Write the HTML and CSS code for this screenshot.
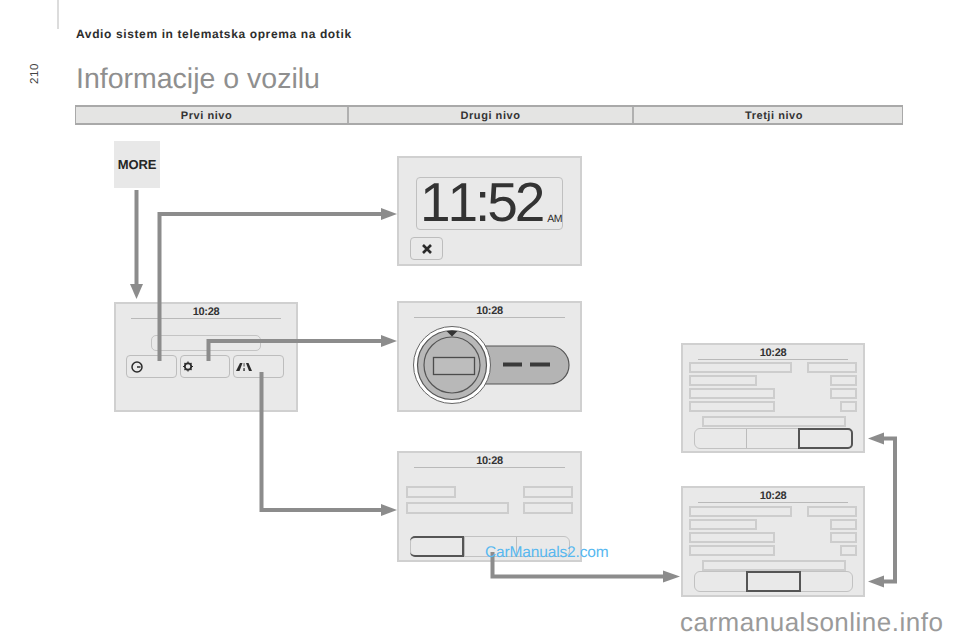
FILE: index.html
```html
<!DOCTYPE html>
<html lang="sl">
<head>
<meta charset="utf-8">
<title>Informacije o vozilu</title>
<link rel="stylesheet" href="styles.css">
</head>
<body>
<div class="page">
  <div class="edge-rule"></div>
  <div class="page-number">210</div>
  <main class="content">
    <div class="running-head">Avdio sistem in telematska oprema na dotik</div>
    <h1 class="title">Informacije o vozilu</h1>
    <div class="levels">
      <div class="level">Prvi nivo</div>
      <div class="level">Drugi nivo</div>
      <div class="level">Tretji nivo</div>
    </div>
  </main>

  <div class="more">MORE</div>

  <section class="screen s-menu">
    <div class="clock">10:28</div>
    <div class="menu-bar"></div>
    <div class="menu-buttons">
      <div class="menu-btn">
        <svg class="icon" width="16" height="14" viewBox="0 0 16 14"><circle cx="6" cy="7" r="5" fill="none" stroke="#2b2b2b" stroke-width="1.500"/><path d="M6 7h3.500" stroke="#2b2b2b" stroke-width="1.500"/></svg>
      </div>
      <div class="menu-btn">
        <svg class="icon icon-tight" width="16" height="14" viewBox="0 0 16 14"><circle cx="6" cy="6.500" r="3.200" fill="none" stroke="#2b2b2b" stroke-width="1.800"/><path d="M6 1.500v1.500M6 10v1.500M1 6.500h1.500M9.500 6.500H11M2.500 3l1 1M8.500 9l1 1M2.500 10l1-1M8.500 4l1-1" stroke="#2b2b2b" stroke-width="1.200"/></svg>
      </div>
      <div class="menu-btn">
        <svg class="icon icon-tight" width="18" height="14" viewBox="0 0 18 14"><path d="M1 11 5 3h2.500L4.500 11zM17 11 13.500 3H11l3 8zM8.300 11l.2-3h1.100l.2 3zM8.600 6.500 8.700 3h.7l.1 3.500z" fill="#2b2b2b"/></svg>
      </div>
    </div>
  </section>

  <section class="screen s-time">
    <div class="time-display"><span class="time-digits">11:52</span><span class="time-am">AM</span></div>
    <div class="close-btn">
      <svg width="12" height="12" viewBox="0 0 12 12"><path d="M2 2l8 8M10 2l-8 8" stroke="#2b2b2b" stroke-width="2.600"/></svg>
    </div>
  </section>

  <section class="screen s-dial">
    <div class="clock">10:28</div>
    <svg class="dial" width="181" height="90" viewBox="0 0 181 90">
      <path d="M53 28H151a19 19 0 0 1 0 38H53z" fill="#b4b4b4" stroke="#555" stroke-width="1.200"/>
      <circle cx="53" cy="47" r="38.500" fill="#fff" stroke="#666" stroke-width="1"/>
      <circle cx="53" cy="47" r="34.500" fill="#b8b8b8" stroke="#555" stroke-width="1.200"/>
      <circle cx="53" cy="47" r="28" fill="#b8b8b8" stroke="#555" stroke-width="1.200"/>
      <rect x="34.500" y="39.500" width="41" height="17" fill="#bdbdbd" stroke="#4c4c4c" stroke-width="1.300"/>
      <path d="M104 46.500h19M131 46.500h20" stroke="#3a3a3a" stroke-width="4"/>
      <path d="M47.500 13h11l-5.500 5.500z" fill="#333"/>
    </svg>
  </section>

  <section class="screen s-trip">
    <div class="clock">10:28</div>
    <div class="trip-rows">
      <div class="row"><div class="field w50"></div><div class="field w50"></div></div>
      <div class="row"><div class="field w103"></div><div class="field w50"></div></div>
    </div>
    <div class="tabs tabs-trip">
      <div class="tab tab-active-first"></div>
      <div class="tab"></div>
      <div class="tab"></div>
    </div>
  </section>

  <section class="screen s-data s-data-a">
    <div class="clock">10:28</div>
    <div class="data-rows">
      <div class="row"><div class="field w103"></div><div class="field w50"></div></div>
      <div class="row"><div class="field w68"></div><div class="field w27"></div></div>
      <div class="row"><div class="field w86"></div><div class="field w27"></div></div>
      <div class="row"><div class="field w86"></div><div class="field w17"></div></div>
      <div class="field wide"></div>
    </div>
    <div class="tabs tabs-data">
      <div class="tab"></div>
      <div class="tab"></div>
      <div class="tab tab-active-last"></div>
    </div>
  </section>

  <section class="screen s-data s-data-b">
    <div class="clock">10:28</div>
    <div class="data-rows">
      <div class="row"><div class="field w103"></div><div class="field w50"></div></div>
      <div class="row"><div class="field w68"></div><div class="field w27"></div></div>
      <div class="row"><div class="field w86"></div><div class="field w27"></div></div>
      <div class="row"><div class="field w86"></div><div class="field w17"></div></div>
      <div class="field wide"></div>
    </div>
    <div class="tabs tabs-data">
      <div class="tab tab-plain"></div>
      <div class="tab tab-active-mid"></div>
      <div class="tab tab-plain"></div>
    </div>
  </section>

  <svg class="arrows" width="960" height="640" viewBox="0 0 960 640">
    <g fill="none" stroke="#8c8c8c" stroke-width="4" stroke-linejoin="miter">
      <path d="M136.500 190V286"/>
      <path d="M159.500 361V214H383"/>
      <path d="M208.500 361V341H383"/>
      <path d="M261.500 372V510H383"/>
      <path d="M492.500 552V576.500H666"/>
      <path d="M882 438.500H895V581.500H882"/>
    </g>
    <g fill="#8c8c8c">
      <path d="M130 284h13l-6.500 15z"/>
      <path d="M381 208l16 6-16 6z"/>
      <path d="M381 335l16 6-16 6z"/>
      <path d="M381 504l16 6-16 6z"/>
      <path d="M663 570.500l17 6-17 6z"/>
      <path d="M884 432.500l-16 6 16 6z"/>
      <path d="M884 575.500l-16 6 16 6z"/>
    </g>
  </svg>

  <div class="mark-blue">CarManuals2.com</div>
  <div class="mark-grey">carmanualsonline.info</div>
</div>
</body>
</html>
```
FILE: styles.css
```css
* { box-sizing: border-box; }
html, body { margin: 0; padding: 0; background: #fff; }
body { font-family: "Liberation Sans", Arial, sans-serif; text-rendering: geometricPrecision; }

.page { position: relative; width: 960px; height: 640px; overflow: hidden; background: #fff; }

.edge-rule { position: absolute; left: 57px; top: 0; width: 2px; height: 29px; background: #dcdcdc; }

.page-number {
  position: absolute; left: 29px; top: 63px;
  writing-mode: vertical-rl; transform: rotate(180deg);
  font-size: 11.500px; line-height: 12px; letter-spacing: 0.6px; color: #444;
}

.content { padding: 28px 57px 0 75px; }

.running-head {
  padding-left: 1px;
  font-size: 12px; line-height: 13px; font-weight: 700; letter-spacing: 0.62px; color: #2e2e2e;
}

.title {
  margin: 20px 0 0; padding-left: 1px;
  font-size: 28.500px; line-height: 36px; font-weight: 400; color: #8f8f8f;
}

.levels {
  display: grid; grid-template-columns: 271px 285px 1fr;
  height: 20px; margin-top: 8px;
  background: #e4e4e3; border: 1px solid #a9a9a9; border-width: 2px 1px;
}
.level {
  display: flex; align-items: center; justify-content: center; padding-top: 1px;
  font-size: 11px; font-weight: 700; letter-spacing: 0.55px; color: #333;
  border-left: 2px solid #b0b0b0;
}
.level:first-child { border-left: 0; padding-right: 10px; }
.level:last-child { padding-left: 12px; }

.more {
  position: absolute; left: 114px; top: 141px; width: 46px; height: 47px;
  display: flex; align-items: center; justify-content: center;
  background: #e8e8e8; font-size: 13px; font-weight: 700; color: #262626; letter-spacing: -0.1px;
}

.screen {
  position: absolute; width: 184px; height: 110px;
  display: flex; flex-direction: column;
  background: #e9e9e9; border: 2px solid #d0d0d0;
}
.s-menu { left: 114px; top: 302px; }
.s-time { left: 397px; top: 156px; width: 185px; }
.s-dial { left: 397px; top: 301px; width: 185px; height: 111px; }
.s-trip { left: 397px; top: 451px; width: 185px; height: 111px; }
.s-data-a { left: 681px; top: 343px; }
.s-data-b { left: 681px; top: 486px; height: 111px; }

.clock {
  height: 15px; margin: 0 15px; padding-top: 1px; flex: none;
  font-size: 11px; line-height: 14px; font-weight: 700; letter-spacing: -0.35px;
  text-align: center; color: #333;
  border-bottom: 1px solid #b9b9b9;
}

.menu-bar {
  width: 110px; height: 16px; margin: 16px 0 0 35px;
  border: 1px solid #c4c4c4; border-radius: 5px;
}
.menu-buttons { display: flex; gap: 3px; margin: 4px 12px 0 10px; }
.menu-btn {
  flex: 1; height: 23px; display: flex; align-items: center; padding-left: 3px;
  border: 1px solid #bdbdbd; border-radius: 4px;
}
.icon { display: block; margin-left: 1px; }
.icon-tight { margin-left: -2px; }

.time-display {
  width: 147px; height: 53px; margin: 19px 0 0 17px; padding: 0 0 2px 3px;
  display: flex; align-items: flex-end;
  border: 1px solid #c0c0c0; border-radius: 4px;
}
.time-digits {
  font-size: 55px; line-height: 50px; letter-spacing: -3.100px; color: #333;
  font-kerning: none; white-space: nowrap;
}
.time-am {
  margin: 0 0 3px 5px; font-size: 10.500px; line-height: 10px; letter-spacing: -0.4px; color: #2e2e2e;
}
.close-btn {
  width: 33px; height: 23px; margin: 7px 0 0 11px;
  display: flex; align-items: center; justify-content: center;
  border: 1px solid #bdbdbd; border-radius: 4px;
}

.dial { display: block; flex: none; }

.row { display: flex; justify-content: space-between; }
.field { height: 12px; border: 2px solid #cdcdcd; }
.w50 { width: 50px; }
.w103 { width: 103px; }
.w68 { width: 68px; }
.w86 { width: 86px; }
.w27 { width: 27px; }
.w17 { width: 17px; }

.trip-rows { display: flex; flex-direction: column; gap: 4px; margin: 18px 7px 0 7px; }

.data-rows { display: flex; flex-direction: column; gap: 2.500px; margin: 2px 6px 0 6px; }
.s-data-b .data-rows { margin-top: 3px; }
.data-rows .field { height: 10.500px; }
.data-rows .wide { width: 144px; height: 11px; margin: 1.500px 0 0 13px; }

.tabs {
  display: flex; height: 21px;
  border: 1px solid #c2c2c2; border-radius: 6px;
}
.tabs-trip { margin: 22px 10px 0 11px; }
.tabs-data { margin: 1px 10px 0 11px; }
.s-data-b .tabs-data { margin-top: 0; }
.tab { flex: 1; border-left: 1px solid #bcbcbc; }
.tab:first-child { border-left: 0; }
.tab-plain { border-left: 0; }
.tab-active-first { margin: -1px 0 -1px -1px; border: 2px solid #555; border-radius: 5px 0 0 5px; }
.tab-active-last { margin: -1px -1px -1px 0; border: 2px solid #555; border-radius: 0 5px 5px 0; }
.tab-active-mid { margin: -1px 0; border: 2px solid #555; }

.arrows { position: absolute; left: 0; top: 0; pointer-events: none; }

.mark-blue {
  position: absolute; left: 485px; top: 544px;
  font-size: 15.500px; line-height: 18px; letter-spacing: -0.15px; color: #57b8f0;
}
.mark-grey {
  position: absolute; left: 680px; top: 608px;
  font-size: 26px; line-height: 28px; letter-spacing: 0.5px; color: #9a9a9a;
}
```
